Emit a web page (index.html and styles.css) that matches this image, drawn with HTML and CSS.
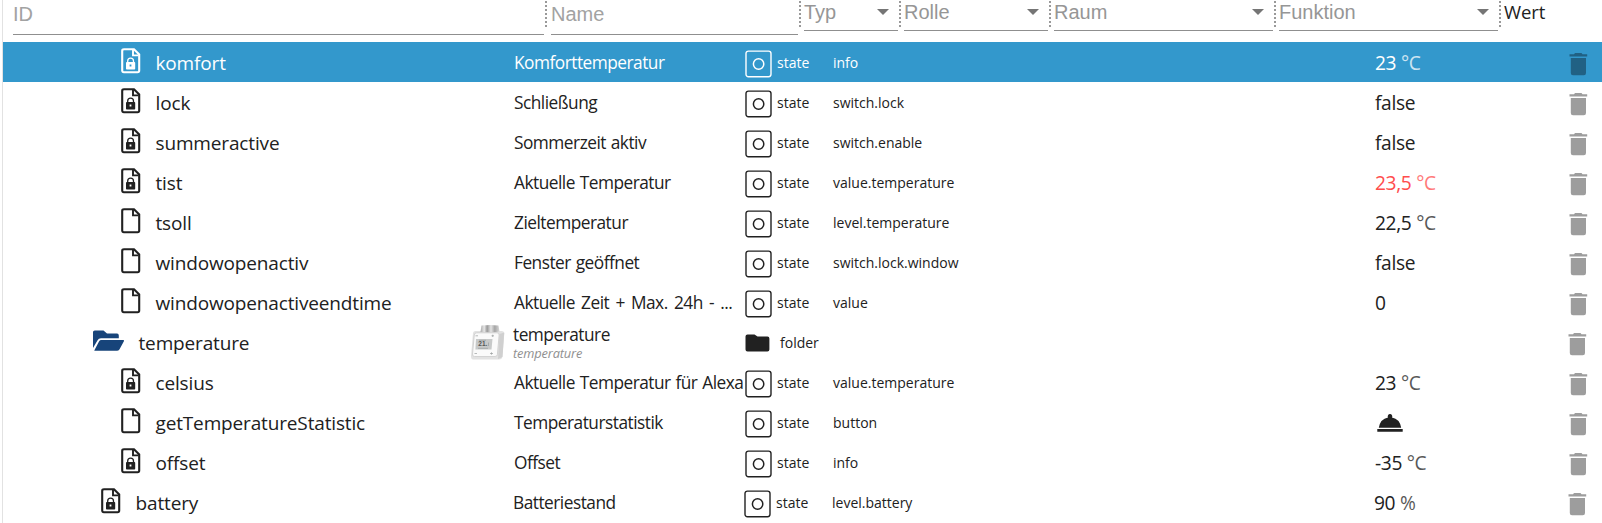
FILE: index.html
```
<!DOCTYPE html>
<html lang="de">
<head>
<meta charset="utf-8">
<title>Objekte</title>
<link rel="stylesheet" href="styles.css">
</head>
<body>
<svg class="defs" aria-hidden="true">
  <symbol id="file" viewBox="0 0 20 26">
    <path d="M3 1.2H13L18.2 6.4V22.6Q18.2 24.2 16.6 24.2H2.8Q1.2 24.2 1.2 22.6V2.8Q1.2 1.2 3 1.2Z" fill="none" stroke="currentColor" stroke-width="2.1"/>
    <path d="M12 2V7.4H17.4" fill="none" stroke="currentColor" stroke-width="1.9"/>
  </symbol>
  <symbol id="locked" viewBox="0 0 20 26">
    <use href="#file" width="20" height="26"/>
    <path d="M6.7 14.5V13a2.9 2.9 0 0 1 5.8 0V14.5" fill="none" stroke="currentColor" stroke-width="1.3"/>
    <path fill-rule="evenodd" d="M6 14H13.4Q14.2 14 14.2 14.8V20.8Q14.2 21.6 13.4 21.6H5.8Q5 21.6 5 20.8V14.8Q5 14 6 14ZM8.6 16.6V18.4H10.4V16.6Z" fill="currentColor"/>
  </symbol>
  <symbol id="state" viewBox="0 0 27 28">
    <rect x="1" y="1.1" width="25" height="25.6" rx="2.4" fill="none" stroke="currentColor" stroke-width="1.4"/>
    <circle cx="13.6" cy="14" r="5.2" fill="none" stroke="currentColor" stroke-width="1.5"/>
  </symbol>
  <symbol id="trash" viewBox="0 0 19 24">
    <path d="M0.5 2.2H5L6 1H12.5L13.5 2.2H18.2V4.5H0.5ZM1.8 6H17V21Q17 23.2 14.8 23.2H4Q1.8 23.2 1.8 21Z" fill="currentColor"/>
  </symbol>
</svg>
<div class="browser">
  <header class="head">
    <div class="field tall c-id">ID</div>
    <div class="field tall c-name">Name</div>
    <div class="field c-typ">Typ<i class="arrow"></i></div>
    <div class="field c-rolle">Rolle<i class="arrow"></i></div>
    <div class="field c-raum">Raum<i class="arrow"></i></div>
    <div class="field c-funk">Funktion<i class="arrow"></i></div>
    <div class="field c-wert">Wert</div>
  </header>
  <main>
    <div class="row selected"><div class="id"><svg class="file"><use href="#locked"/></svg><span>komfort</span></div><div class="name">Komforttemperatur</div><div class="type"><svg class="state"><use href="#state"/></svg>state</div><div class="role">info</div><div class="value">23 <small>°C</small></div><svg class="trash"><use href="#trash"/></svg></div>
    <div class="row"><div class="id"><svg class="file"><use href="#locked"/></svg><span>lock</span></div><div class="name">Schließung</div><div class="type"><svg class="state"><use href="#state"/></svg>state</div><div class="role">switch.lock</div><div class="value">false</div><svg class="trash"><use href="#trash"/></svg></div>
    <div class="row"><div class="id"><svg class="file"><use href="#locked"/></svg><span>summeractive</span></div><div class="name">Sommerzeit aktiv</div><div class="type"><svg class="state"><use href="#state"/></svg>state</div><div class="role">switch.enable</div><div class="value">false</div><svg class="trash"><use href="#trash"/></svg></div>
    <div class="row"><div class="id"><svg class="file"><use href="#locked"/></svg><span>tist</span></div><div class="name">Aktuelle Temperatur</div><div class="type"><svg class="state"><use href="#state"/></svg>state</div><div class="role">value.temperature</div><div class="value changed">23,5 <small>°C</small></div><svg class="trash"><use href="#trash"/></svg></div>
    <div class="row"><div class="id"><svg class="file"><use href="#file"/></svg><span>tsoll</span></div><div class="name">Zieltemperatur</div><div class="type"><svg class="state"><use href="#state"/></svg>state</div><div class="role">level.temperature</div><div class="value">22,5 <small>°C</small></div><svg class="trash"><use href="#trash"/></svg></div>
    <div class="row"><div class="id"><svg class="file"><use href="#file"/></svg><span>windowopenactiv</span></div><div class="name">Fenster geöffnet</div><div class="type"><svg class="state"><use href="#state"/></svg>state</div><div class="role">switch.lock.window</div><div class="value">false</div><svg class="trash"><use href="#trash"/></svg></div>
    <div class="row"><div class="id"><svg class="file"><use href="#file"/></svg><span>windowopenactiveendtime</span></div><div class="name long">Aktuelle Zeit + Max. 24h - ...</div><div class="type"><svg class="state"><use href="#state"/></svg>state</div><div class="role">value</div><div class="value">0</div><svg class="trash"><use href="#trash"/></svg></div>
    <div class="row outer folder">
      <div class="id"><svg class="open" viewBox="0 0 32 22"><path d="M0 18V2Q0 .4 1.8.4H10.5L14 3.6H24Q25.8 3.6 25.8 5.4V8.3H8Q5.6 8.3 4.6 10.2Z" fill="#17447a"/><path d="M1.4 20.2 6 11.4Q6.8 10 8.4 10H30Q31.6 10 30.9 11.3L26.4 19.4Q25.5 20.7 24 20.7H2Q1 20.7 1.4 20.2Z" fill="#17447a"/></svg><span>temperature</span></div>
      <svg class="device" viewBox="0 0 35 36">
        <defs>
          <linearGradient id="knob"><stop stop-color="#aaa"/><stop offset=".2" stop-color="#e6e6e6"/><stop offset=".35" stop-color="#999"/><stop offset=".55" stop-color="#e4e4e4"/><stop offset=".75" stop-color="#a5a5a5"/><stop offset="1" stop-color="#d8d8d8"/></linearGradient>
        </defs>
        <path d="M1 31 3 8Q3.200 6 5.500 6H32Q34.300 6 34.300 8.500L32.500 31Q32.200 34.500 29 34.500H3Q1 34.500 1 31Z" fill="#e2e2e2"/>
        <path d="M29.500 9 34.200 7.500 32.500 32 28 34Z" fill="#d0d0d0"/>
        <path d="M11.500.500Q20-.500 28.500.500L29.500 6.500Q21 8 10.500 7Z" fill="url(#knob)"/>
        <path d="M2.500 29 4.300 10Q4.500 7.800 6.800 7.800H27Q29.300 7.800 29.100 10L27.400 29.400Q27.200 31.500 25 31.500H4.500Q2.300 31.500 2.500 29Z" fill="#fafafa" stroke="#ccc" stroke-width=".8"/>
        <path d="M6 14H22.500L21.500 24.500H5.400Z" fill="#c7c9c9"/>
        <text x="8.300" y="21.300" class="digits">21.</text>
        <path d="M18.500 17.500V21M8 23.300H18M9 15.300H16M5.500 10.800H8M21.500 10.800H24M22.700 9.700V12M4.500 28.500H7M20 28.500H23M21.500 27.300V29.700" stroke="#9a9d9d" stroke-width=".7"/>
      </svg>
      <div class="name double"><b>temperature</b><em>temperature</em></div>
      <div class="type"><svg class="closed" viewBox="0 0 25 18"><path d="M2.500.500H9.500L12.500 2.500H22.500Q24.400 2.500 24.400 4.500V15.500Q24.400 17.500 22.400 17.500H2.500Q.500 17.500.500 15.500V2.500Q.500.500 2.500.500Z" fill="#212121"/></svg>folder</div>
      <div class="role"></div><div class="value"></div><svg class="trash"><use href="#trash"/></svg>
    </div>
    <div class="row"><div class="id"><svg class="file"><use href="#locked"/></svg><span>celsius</span></div><div class="name">Aktuelle Temperatur für Alexa</div><div class="type"><svg class="state"><use href="#state"/></svg>state</div><div class="role">value.temperature</div><div class="value">23 <small>°C</small></div><svg class="trash"><use href="#trash"/></svg></div>
    <div class="row"><div class="id"><svg class="file"><use href="#file"/></svg><span>getTemperatureStatistic</span></div><div class="name">Temperaturstatistik</div><div class="type"><svg class="state"><use href="#state"/></svg>state</div><div class="role">button</div><div class="value"><svg class="bell" viewBox="0 0 26 18"><path d="M.3 15H25.700V17.700H.3ZM1.800 13.800Q3.300 4.800 11 3.500A2.300 2.300 0 1 1 15 3.500Q22.700 4.800 24.200 13.800Z" fill="#212121"/></svg></div><svg class="trash"><use href="#trash"/></svg></div>
    <div class="row"><div class="id"><svg class="file"><use href="#locked"/></svg><span>offset</span></div><div class="name">Offset</div><div class="type"><svg class="state"><use href="#state"/></svg>state</div><div class="role">info</div><div class="value">-35 <small>°C</small></div><svg class="trash"><use href="#trash"/></svg></div>
    <div class="row outer"><div class="id"><svg class="file"><use href="#locked"/></svg><span>battery</span></div><div class="name">Batteriestand</div><div class="type"><svg class="state"><use href="#state"/></svg>state</div><div class="role">level.battery</div><div class="value">90 <small>%</small></div><svg class="trash"><use href="#trash"/></svg></div>
  </main>
</div>
</body>
</html>
```
FILE: styles.css
```
* { box-sizing: border-box; }
body {
  margin: 0;
  height: 523px;
  overflow: hidden;
  background: #fff;
  color: #212121;
  font-family: "Open Sans", "Noto Sans", sans-serif;
}
.defs { display: none; }
.browser {
  height: 523px;
  margin-left: 2px;
  border-left: 1px solid #e2e2e2;
  overflow: hidden;
}
.head {
  display: flex;
  align-items: flex-start;
  height: 42px;
  padding-left: 10px;
}
.field {
  display: flex;
  flex: none;
  height: 31px;
  margin-right: 6px;
  border-bottom: 1px solid #8f8f8f;
  color: #969696;
  font: 20px/25px "Liberation Sans", Arial, sans-serif;
}
.tall { height: 35px; line-height: 29px; color: #a2a2a2; }
.field + .field::before {
  content: "";
  flex: none;
  width: 2px;
  height: 26px;
  margin: 1px 3px 0 -5px;
  background: repeating-linear-gradient(#999 0 2px, transparent 2px 4px);
}
.c-id { width: 531px; }
.c-name { width: 247px; margin-left: 1px; }
.field.c-name::before { margin: 1px 4px 0 -6px; }
.c-typ { width: 94px; }
.c-rolle { width: 144px; }
.c-raum { width: 219px; }
.c-funk { width: 219px; }
.c-wert {
  border: 0;
  color: #212121;
  font: 18.5px/23px "Open Sans", sans-serif;
  letter-spacing: -.1px;
}
.arrow {
  width: 12px;
  height: 6px;
  margin: 9px 9px 0 auto;
  background: #757575;
  clip-path: polygon(0 0, 100% 0, 50% 100%);
}
.row {
  display: grid;
  grid-template-columns: 511px 230px 89px 542px 194px 19px;
  align-items: center;
  height: 40px;
}
.selected { background: #3398cc; color: #fff; }
.id {
  display: flex;
  align-items: center;
  padding-left: 118px;
  font-size: 19px;
  letter-spacing: -.15px;
  line-height: 38px;
}
.id span { padding-top: 2px; }
.file { width: 20px; height: 26px; margin: 0 14.5px 3px 0; }
.name {
  padding-top: 2px;
  font-size: 17.3px;
  letter-spacing: -.5px;
  word-spacing: .8px;
  line-height: 38px;
  white-space: nowrap;
}
.long { word-spacing: 2.2px; }
.type {
  display: flex;
  align-items: center;
  padding-top: 2px;
  font-size: 14px;
  line-height: 38px;
}
.state { width: 27px; height: 28px; margin: 2px 5.5px 0 .5px; }
.role { padding-top: 2px; font-size: 14px; line-height: 38px; }
.value {
  padding-top: 2px;
  font-size: 19.2px;
  letter-spacing: -.35px;
  line-height: 38px;
  white-space: nowrap;
}
.value small { font-size: inherit; opacity: .75; }
.changed { color: #ff4d4d; }
.trash { width: 19px; height: 24px; margin-top: 4px; color: #9d9d9d; }
.selected .trash { color: #216184; }
.outer { transform: translateX(-1px); }
.outer .id { padding-left: 99px; }
.folder { grid-template-columns: 468px 43px 230px 89px 542px 194px 19px; }
.folder .id { padding-left: 91px; }
.open { width: 32px; height: 22px; margin: 0 13.5px 3px 0; }
.device { width: 35px; height: 36px; margin-top: 1px; }
.digits { font: bold 6.5px "Liberation Sans", sans-serif; letter-spacing: 0; fill: #555; }
.double { display: flex; flex-direction: column; padding-top: 3px; }
.double b { font-weight: 400; line-height: 20px; }
.double em { font-size: 12.8px; letter-spacing: -.15px; line-height: 17px; color: #909090; }
.closed { width: 25px; height: 18px; margin: 0 10px 1px 2px; }
.bell { display: block; width: 26px; height: 18px; margin: 0 0 0 2px; }
```
